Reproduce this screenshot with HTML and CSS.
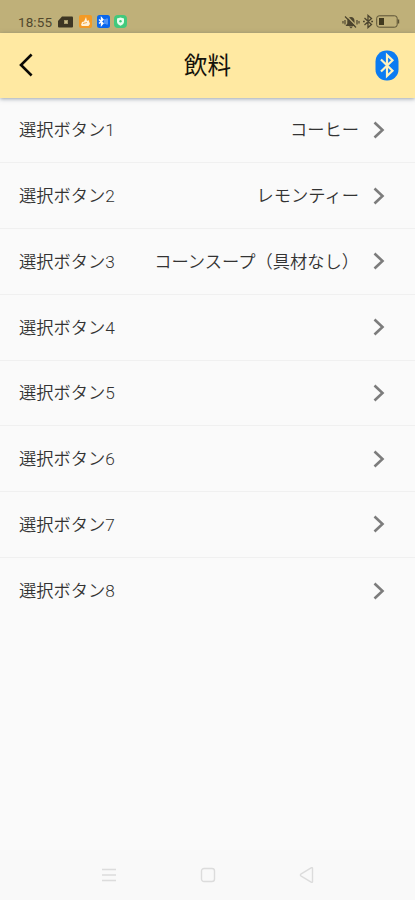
FILE: index.html
```html
<!DOCTYPE html>
<html lang="ja">
<head>
<meta charset="utf-8">
<meta name="viewport" content="width=device-width, initial-scale=1">
<title>飲料</title>
<link rel="stylesheet" href="styles.css">
</head>
<body>
<div class="screen">
  <div class="status">
    <span class="time">18:55</span>
    <svg class="card" width="15" height="12" viewBox="0 0 15 12"><path d="M4 .5h10a1 1 0 0 1 1 1v9a1 1 0 0 1-1 1H1a1 1 0 0 1-1-1V5z" fill="#3d3623"/><path d="M6 4h4v4H6z" fill="#a79b6d"/><path d="M7.2 5.2h1.6v1.6H7.2z" fill="#e0d49c"/></svg>
    <svg class="app" width="13" height="13" viewBox="0 0 13 13"><rect width="13" height="13" rx="2" fill="#f39a25"/><path d="M2 10l1-3 2-.5L7 2l1 4 1.500-1 1.500 4-1.500 2H3z" fill="#fff1d8"/><path d="M4 8.500l4-1" stroke="#f39a25" stroke-width=".8"/></svg>
    <svg class="app" width="13" height="13" viewBox="0 0 13 13"><rect width="13" height="13" rx="2.5" fill="#0866ed"/><path d="M2 4.500L6 8.200 4.500 10V3L6 4.800 2 8.500" fill="none" stroke="#fff" stroke-width="1.4"/><path d="M8 4v5M10 3.5v6" stroke="#8fbcff" stroke-width="1.1"/></svg>
    <svg class="app" width="13" height="13" viewBox="0 0 13 13"><rect width="13" height="13" rx="4" fill="#42c97c"/><path d="M6.5 2.5l3.5 1v3.3c0 2-1.6 3.1-3.5 4-1.9-.9-3.5-2-3.5-4V3.500z" fill="#e9fff0"/><circle cx="6.500" cy="6.300" r="1.200" fill="#42c97c"/></svg>
    <span class="grow"></span>
    <svg class="mute" width="18" height="14" viewBox="0 0 18 14"><path d="M3.500 11h10.500l-1.500-2.500V6c0-2.500-1.500-4-3.500-4S5.300 3.500 5.300 6v2.500zM7 11.500h4L9 13.500z" fill="#4d452e"/><path d="M4.500 .8l10.500 11" stroke="#bfb079" stroke-width="1.300"/><path d="M3 1.500l11 11M1 6v2.500M3 5v4.500M15 5v4.500M17 6v2.500" stroke="#4d452e" stroke-width="1.200"/></svg>
    <svg class="bt-small" width="10" height="15" viewBox="0 0 10 15"><path d="M1.500 4l7 6.500L5 13.500v-12L8.500 4.500l-7 6.500M0 7.500h1.800M8.200 7.500H10" fill="none" stroke="#4d452e" stroke-width="1.300"/></svg>
    <svg class="battery" width="24" height="13" viewBox="0 0 24 13"><rect x=".7" y=".8" width="20.500" height="11.400" rx="2.500" fill="none" stroke="#5b5235"/><path d="M3 3h5v7H3z" fill="#40391f"/><path d="M22.500 4.500v4" stroke="#5b5235" stroke-width="1.400"/></svg>
  </div>
  <header class="bar">
    <svg class="back" width="14" height="24" viewBox="0 0 14 24"><path d="M12.600 1.500L2 12l10.600 10.500" fill="none" stroke="#0b0a05" stroke-width="2.600"/></svg>
    <h1 class="title">飲料</h1>
    <svg class="bt" width="24" height="31" viewBox="0 0 24 31"><rect x=".5" y=".5" width="23" height="30" rx="11" fill="#0b7bf2"/><path d="M6 9.500l11.500 11.300L12 26V5l5.500 5.200L6 21.500" fill="none" stroke="#fff3c0" stroke-width="2.200"/></svg>
  </header>
  <ul class="list">
    <li class="row"><span class="label">選択ボタン1</span><span class="value">コーヒー</span><svg class="chev" viewBox="0 0 12 18"><path d="M1.500 1.500L9.500 9l-8 7.500"/></svg></li>
    <li class="row"><span class="label">選択ボタン2</span><span class="value">レモンティー</span><svg class="chev" viewBox="0 0 12 18"><path d="M1.500 1.500L9.500 9l-8 7.500"/></svg></li>
    <li class="row"><span class="label">選択ボタン3</span><span class="value">コーンスープ（具材なし）</span><svg class="chev" viewBox="0 0 12 18"><path d="M1.500 1.500L9.500 9l-8 7.500"/></svg></li>
    <li class="row"><span class="label">選択ボタン4</span><span class="value"></span><svg class="chev" viewBox="0 0 12 18"><path d="M1.500 1.500L9.500 9l-8 7.500"/></svg></li>
    <li class="row"><span class="label">選択ボタン5</span><span class="value"></span><svg class="chev" viewBox="0 0 12 18"><path d="M1.500 1.500L9.500 9l-8 7.500"/></svg></li>
    <li class="row"><span class="label">選択ボタン6</span><span class="value"></span><svg class="chev" viewBox="0 0 12 18"><path d="M1.500 1.500L9.500 9l-8 7.500"/></svg></li>
    <li class="row"><span class="label">選択ボタン7</span><span class="value"></span><svg class="chev" viewBox="0 0 12 18"><path d="M1.500 1.500L9.500 9l-8 7.500"/></svg></li>
    <li class="row last"><span class="label">選択ボタン8</span><span class="value"></span><svg class="chev" viewBox="0 0 12 18"><path d="M1.500 1.500L9.500 9l-8 7.500"/></svg></li>
  </ul>
  <nav class="nav">
    <svg width="16" height="16" viewBox="0 0 16 16"><path d="M1 2.500h14M1 8h14M1 13.500h14"/></svg>
    <svg width="16" height="16" viewBox="0 0 16 16"><rect x="1.500" y="1.500" width="13" height="13" rx="2.500"/></svg>
    <svg width="16" height="16" viewBox="0 0 16 16"><path d="M13.500 1.200v13.600a.7.700 0 0 1-1 .5L1.800 8.800a1 1 0 0 1 0-1.600L12.500.7a.7.700 0 0 1 1 .5z"/></svg>
  </nav>
</div>
</body>
</html>
```
FILE: styles.css
```css
* { box-sizing: border-box; }
body {
  margin: 0;
  background: #fafafa;
  color: #333;
  font-family: Roboto, "Noto Sans CJK JP", sans-serif;
}
svg { display: block; flex: none; }
.screen { display: flex; flex-direction: column; height: 900px; overflow: hidden; }
.status {
  flex: none;
  display: flex;
  align-items: center;
  height: 33px;
  padding: 10px 15px 0 18px;
  background: #bfb079;
}
.time { width: 40px; font-size: 13.5px; line-height: 14px; color: #51482d; letter-spacing: .1px; }
.card { margin-right: 6px; }
.app { margin-right: 4.5px; }
.grow { flex: 1; }
.bt-small { margin: 0 3px; }
.bar {
  flex: none;
  display: grid;
  grid-template-columns: 60px 1fr 60px;
  align-items: center;
  height: 64.500px;
  padding: 0 16px 0 19px;
  background: #ffe9a2;
  box-shadow: 0 1px 4px rgba(60, 80, 100, .5);
}
.title { margin: 0; padding: 2px 3px 0 0; text-align: center; font-size: 23.500px; line-height: 32px; font-weight: 400; color: #15120a; }
.bt { justify-self: end; }
.list { flex: 1; margin: 0; padding: 0; list-style: none; }
.row {
  display: flex;
  align-items: center;
  height: 65.750px;
  padding: 0 30px 0 19px;
  border-bottom: 1px solid #f0f0f0;
  font-size: 17.250px;
  font-weight: 350;
  line-height: 24px;
  white-space: nowrap;
}
.row.last { border-bottom: 0; }
.label, .value { padding-top: 1px; }
.value { flex: 1; margin-right: 14px; text-align: right; }
.chev { width: 12px; height: 18px; fill: none; stroke: #7c7c7c; stroke-width: 2.600; }
.nav {
  flex: none;
  display: flex;
  align-items: center;
  justify-content: space-between;
  height: 50px;
  padding: 0 100px 0 101px;
  background: #f9f9f9;
}
.nav svg { fill: none; stroke: #dcdcdc; stroke-width: 1.400; }
```
